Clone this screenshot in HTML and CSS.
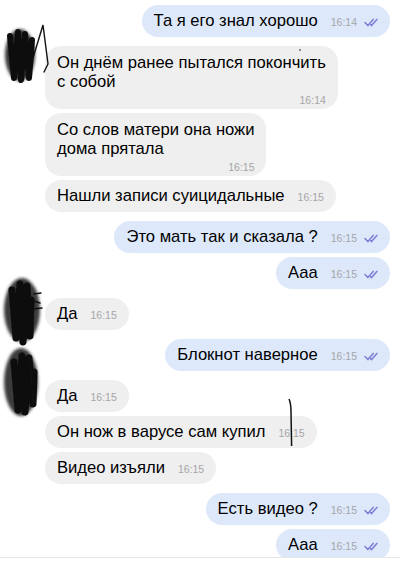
FILE: index.html
```html
<!DOCTYPE html>
<html lang="ru">
<head>
    <meta charset="UTF-8">
    <meta name="viewport" content="width=device-width, initial-scale=1.0">
    <title>Чат</title>
    <link rel="stylesheet" href="styles.css">
</head>
<body>
    <div class="screen">
        <div class="chat">
            <div class="msg out">
                <div class="bubble"><span class="text">Та я его знал хорошо</span><span class="meta"><span class="time">16:14</span><svg class="check" viewBox="0 0 14 9"><path d="M1 4.6 L3.9 7.6 L9.2 1.4"/><path d="M6.6 6.6 L7.6 7.6 L12.9 1.4"/></svg></span></div>
            </div>
            <div class="msg in group">
                <div class="bubble multi"><div class="text">Он днём ранее пытался покончить<br>с собой</div><div class="meta"><span class="time">16:14</span></div><span class="dot"></span></div>
            </div>
            <div class="msg in">
                <div class="bubble multi"><div class="text">Со слов матери она ножи<br>дома прятала</div><div class="meta"><span class="time">16:15</span></div></div>
            </div>
            <div class="msg in">
                <div class="bubble"><span class="text">Нашли записи суицидальные</span><span class="meta"><span class="time">16:15</span></span></div>
            </div>
            <div class="msg out group">
                <div class="bubble"><span class="text">Это мать так и сказала ?</span><span class="meta"><span class="time">16:15</span><svg class="check" viewBox="0 0 14 9"><path d="M1 4.6 L3.9 7.6 L9.2 1.4"/><path d="M6.6 6.6 L7.6 7.6 L12.9 1.4"/></svg></span></div>
            </div>
            <div class="msg out">
                <div class="bubble"><span class="text">Ааа</span><span class="meta"><span class="time">16:15</span><svg class="check" viewBox="0 0 14 9"><path d="M1 4.6 L3.9 7.6 L9.2 1.4"/><path d="M6.6 6.6 L7.6 7.6 L12.9 1.4"/></svg></span></div>
            </div>
            <div class="msg in group">
                <div class="bubble"><span class="text">Да</span><span class="meta"><span class="time">16:15</span></span></div>
            </div>
            <div class="msg out group">
                <div class="bubble"><span class="text">Блокнот наверное</span><span class="meta"><span class="time">16:15</span><svg class="check" viewBox="0 0 14 9"><path d="M1 4.6 L3.9 7.6 L9.2 1.4"/><path d="M6.6 6.6 L7.6 7.6 L12.9 1.4"/></svg></span></div>
            </div>
            <div class="msg in group">
                <div class="bubble"><span class="text">Да</span><span class="meta"><span class="time">16:15</span></span></div>
            </div>
            <div class="msg in">
                <div class="bubble"><span class="text">Он нож в варусе сам купил</span><span class="meta"><span class="time">16:15</span></span><svg class="pen-line" viewBox="0 0 8 50"><path d="M2 1 C3.5 4 4 8 4 14 L4.6 48"/></svg></div>
            </div>
            <div class="msg in">
                <div class="bubble"><span class="text">Видео изъяли</span><span class="meta"><span class="time">16:15</span></span></div>
            </div>
            <div class="msg out group">
                <div class="bubble"><span class="text">Есть видео ?</span><span class="meta"><span class="time">16:15</span><svg class="check" viewBox="0 0 14 9"><path d="M1 4.6 L3.9 7.6 L9.2 1.4"/><path d="M6.6 6.6 L7.6 7.6 L12.9 1.4"/></svg></span></div>
            </div>
            <div class="msg out">
                <div class="bubble"><span class="text">Ааа</span><span class="meta"><span class="time">16:15</span><svg class="check" viewBox="0 0 14 9"><path d="M1 4.6 L3.9 7.6 L9.2 1.4"/><path d="M6.6 6.6 L7.6 7.6 L12.9 1.4"/></svg></span></div>
            </div>
        </div>
        <div class="footer"></div>

        <!-- scribbled-out avatars -->
        <svg class="scribbles" viewBox="0 0 50 570">
            <defs>
                <filter id="soft" x="-50%" y="-50%" width="200%" height="200%"><feGaussianBlur stdDeviation="1.8"/></filter>
                <filter id="softer" x="-50%" y="-50%" width="200%" height="200%"><feGaussianBlur stdDeviation="0.6"/></filter>
            </defs>
            <g filter="url(#soft)" fill="#3a3a3a">
                <ellipse cx="20" cy="55" rx="15" ry="26"/>
                <ellipse cx="22" cy="310" rx="18" ry="32"/>
                <ellipse cx="21" cy="382" rx="17" ry="34"/>
            </g>
            <g filter="url(#softer)" fill="none" stroke="#0e0e0e" stroke-linecap="round" stroke-linejoin="round">
                <path d="M10 36 L14 78 L18 32 L21 80 L25 34 L29 78 L32 40" stroke-width="6"/>
                <path d="M12 290 L16 338 L20 284 L23 342 L27 286 L30 336 L31 300" stroke-width="7"/>
                <path d="M14 362 L18 410 L22 356 L25 412 L29 358 L33 404 L34 372" stroke-width="7"/>
            </g>
            <g fill="none" stroke="#111" stroke-width="1.4" stroke-linecap="round">
                <path d="M33 58 L43 25 L48 64 L44 72"/>
                <path d="M34 294 L41 293 M34 301 L40 303 M33 309 L42 308"/>
                <path d="M30 356 L33 406"/>
            </g>
        </svg>
    </div>
</body>
</html>
```

FILE: styles.css
```css
body {
    margin: 0;
    padding: 0;
    background-color: #fff;
    font-family: 'Liberation Sans', Arial, sans-serif;
    color: #000;
}
.screen {
    position: relative;
    width: 400px;
    height: 570px;
    overflow: hidden;
    display: flex;
    flex-direction: column;
}
.chat {
    height: 552px;
    padding-top: 5px;
    overflow: hidden;
    display: flex;
    flex-direction: column;
}
.msg {
    display: flex;
    margin-top: 4px;
}
.msg:first-child {
    margin-top: 0;
}
.msg.group {
    margin-top: 9px;
}
.msg.in {
    justify-content: flex-start;
    padding-left: 45px;
}
.msg.out {
    justify-content: flex-end;
    padding-right: 10px;
}
.bubble {
    position: relative;
    display: flex;
    align-items: baseline;
    padding: 6px 12px 7px 12px;
    border-radius: 16px;
    font-size: 16.6px;
    line-height: 19px;
}
.msg.in .bubble {
    background-color: #efefef;
}
.msg.out .bubble {
    background-color: #dde9fb;
}
.bubble.multi {
    display: block;
    padding: 7px 12px 2px 12px;
}
.meta {
    display: flex;
    align-items: center;
    margin-left: 13px;
}
.bubble.multi .meta {
    justify-content: flex-end;
    margin-left: 0;
    margin-top: 3px;
    height: 13px;
}
.time {
    font-size: 10.5px;
    line-height: 13px;
    color: #a5a5a7;
}
.check {
    width: 14px;
    height: 9px;
    margin-left: 7px;
    fill: none;
    stroke: #7a7ed4;
    stroke-width: 1.5;
    stroke-linecap: round;
    stroke-linejoin: round;
}
.dot {
    position: absolute;
    top: 3px;
    right: 37px;
    width: 2px;
    height: 2px;
    border-radius: 50%;
    background-color: #666;
}
.pen-line {
    position: absolute;
    top: -18px;
    left: 242px;
    width: 8px;
    height: 50px;
    fill: none;
    stroke: #111;
    stroke-width: 1.5;
}
.footer {
    flex: 1;
    background-color: #fff;
    border-top: 1px solid #e6e6e6;
}
.scribbles {
    position: absolute;
    top: 0;
    left: 0;
    width: 50px;
    height: 570px;
}
```
